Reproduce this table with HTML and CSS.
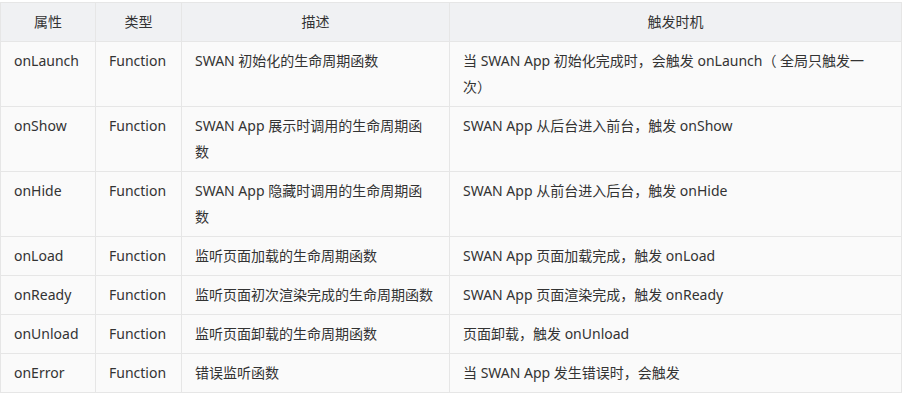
FILE: index.html
```html
<!DOCTYPE html>
<html lang="zh-CN">
<head>
    <meta charset="UTF-8">
    <title>App 生命周期</title>
    <link rel="stylesheet" href="styles.css">
</head>
<body>
    <table class="tabla">
        <colgroup>
            <col class="c-prop">
            <col class="c-tipo">
            <col class="c-desc">
            <col class="c-cuando">
        </colgroup>
        <tr>
            <th>属性</th>
            <th>类型</th>
            <th>描述</th>
            <th>触发时机</th>
        </tr>
        <tr>
            <td>onLaunch</td>
            <td>Function</td>
            <td>SWAN 初始化的生命周期函数</td>
            <td>当 SWAN App 初始化完成时，会触发 onLaunch（ 全局只触发一次）</td>
        </tr>
        <tr>
            <td>onShow</td>
            <td>Function</td>
            <td>SWAN App 展示时调用的生命周期函数</td>
            <td>SWAN App 从后台进入前台，触发 onShow</td>
        </tr>
        <tr>
            <td>onHide</td>
            <td>Function</td>
            <td>SWAN App 隐藏时调用的生命周期函数</td>
            <td>SWAN App 从前台进入后台，触发 onHide</td>
        </tr>
        <tr>
            <td>onLoad</td>
            <td>Function</td>
            <td>监听页面加载的生命周期函数</td>
            <td>SWAN App 页面加载完成，触发 onLoad</td>
        </tr>
        <tr>
            <td>onReady</td>
            <td>Function</td>
            <td>监听页面初次渲染完成的生命周期函数</td>
            <td>SWAN App 页面渲染完成，触发 onReady</td>
        </tr>
        <tr>
            <td>onUnload</td>
            <td>Function</td>
            <td>监听页面卸载的生命周期函数</td>
            <td>页面卸载，触发 onUnload</td>
        </tr>
        <tr>
            <td>onError</td>
            <td>Function</td>
            <td>错误监听函数</td>
            <td>当 SWAN App 发生错误时，会触发</td>
        </tr>
    </table>
</body>
</html>
```

FILE: styles.css
```css
body {
    margin: 0;
    background: #fff;
    font-family: "Noto Sans", "Noto Sans CJK SC", sans-serif;
    font-size: 14px;
    color: #333;
}
.tabla {
    width: 901px;
    margin-top: 2px;
    border-collapse: collapse;
    table-layout: fixed;
}
.c-prop { width: 95px; }
.c-tipo { width: 86px; }
.c-desc { width: 268px; }
.c-cuando { width: 452px; }
.tabla th,
.tabla td {
    border: 1px solid #e6e6e6;
    padding: 6px 13px;
    line-height: 26px;
    vertical-align: top;
    text-align: left;
}
.tabla th {
    background: #f0f1f3;
    font-weight: normal;
    text-align: center;
}
.tabla td {
    background: #fafafa;
}
.tabla td:nth-child(4) {
    padding-right: 36px;
}
```
